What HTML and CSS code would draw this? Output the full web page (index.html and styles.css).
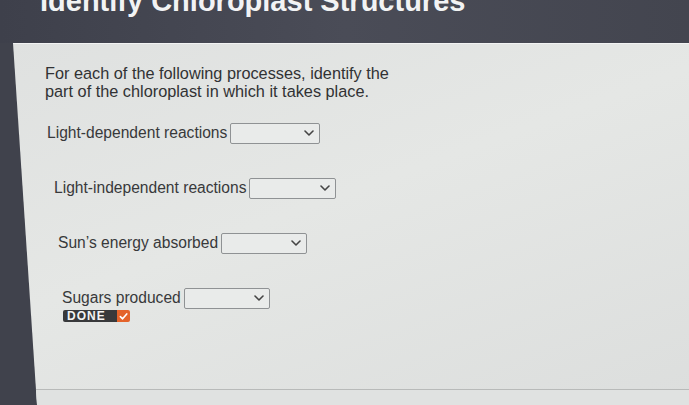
FILE: index.html
```html
<!DOCTYPE html>
<html>
<head>
<meta charset="utf-8">
<link rel="stylesheet" href="styles.css">
</head>
<body>
<header class="top">
  <h1 class="title">Identify Chloroplast Structures</h1>
</header>
<section class="panel">
  <div class="content">
    <p class="question">For each of the following processes, identify the<br>part of the chloroplast in which it takes place.</p>
    <div class="rows">
      <div class="row r1"><span class="label">Light-dependent reactions</span><div class="select w1"><svg class="chev" viewBox="0 0 10 6" width="10" height="6"><path d="M1 1 L5 5 L9 1" fill="none" stroke="#444" stroke-width="1.6" stroke-linecap="round" stroke-linejoin="round"/></svg></div></div>
      <div class="row r2"><span class="label">Light-independent reactions</span><div class="select w2"><svg class="chev" viewBox="0 0 10 6" width="10" height="6"><path d="M1 1 L5 5 L9 1" fill="none" stroke="#444" stroke-width="1.6" stroke-linecap="round" stroke-linejoin="round"/></svg></div></div>
      <div class="row r3"><span class="label">Sun’s energy absorbed</span><div class="select w3"><svg class="chev" viewBox="0 0 10 6" width="10" height="6"><path d="M1 1 L5 5 L9 1" fill="none" stroke="#444" stroke-width="1.6" stroke-linecap="round" stroke-linejoin="round"/></svg></div></div>
      <div class="row r4"><span class="label">Sugars produced</span><div class="select w4"><svg class="chev" viewBox="0 0 10 6" width="10" height="6"><path d="M1 1 L5 5 L9 1" fill="none" stroke="#444" stroke-width="1.6" stroke-linecap="round" stroke-linejoin="round"/></svg></div></div>
    </div>
    <div class="done"><span class="done-text">DONE</span><span class="done-check"><svg viewBox="0 0 10 10" width="9" height="9"><path d="M1.5 5.2 L4 7.6 L8.6 2.2" fill="none" stroke="#fff" stroke-width="1.8" stroke-linecap="round" stroke-linejoin="round"/></svg></span></div>
  </div>
  <div class="footer"></div>
</section>
</body>
</html>
```

FILE: styles.css
```css
html, body {
  margin: 0;
  padding: 0;
  height: 100%;
  overflow: hidden;
}
body {
  background: #40424c;
  font-family: "Liberation Sans", Arial, sans-serif;
  display: flex;
  flex-direction: column;
  width: 689px;
  height: 405px;
}
.top {
  height: 43px;
  flex: none;
  background: linear-gradient(90deg, #3e404b 0%, #4a4c57 50%, #43454f 100%);
}
.title {
  margin: -13px 0 0 40px;
  font-size: 29px;
  line-height: 29px;
  font-weight: bold;
  color: #f2f3f4;
  white-space: nowrap;
}
.panel {
  flex: 1;
  display: flex;
  flex-direction: column;
  background: linear-gradient(160deg, #dfe1e0 0%, #e5e7e5 45%, #dcdedd 100%);
  clip-path: polygon(13px 0, 100% 0, 100% 100%, 37px 100%);
  border-top: 1px solid #f2f3f3;
}
.content {
  flex: 1;
  padding: 20px 0 0 45px;
  color: #3b3c3e;
}
.question {
  margin: 0;
  font-size: 16.3px;
  line-height: 18px;
  color: #313234;
}
.rows {
  margin-top: 22px;
  display: flex;
  flex-direction: column;
  gap: 33px;
}
.row {
  display: flex;
  align-items: center;
  gap: 3px;
  height: 22px;
}
.r1 { padding-left: 2px; }
.r2 { padding-left: 9px; }
.r3 { padding-left: 13px; }
.r4 { padding-left: 17px; }
.label {
  font-size: 15.6px;
  color: #38393b;
}
.select {
  height: 21px;
  box-sizing: border-box;
  border: 1px solid #8f9294;
  border-radius: 2px;
  background: #e9ebea;
  display: flex;
  align-items: center;
  justify-content: flex-end;
  padding-right: 5px;
}
.w1 { width: 90px; }
.w2 { width: 87px; }
.w3 { width: 86px; }
.w4 { width: 86px; }
.chev { display: block; }
.done {
  margin: 1px 0 0 18px;
  display: flex;
  align-items: stretch;
  height: 12px;
  width: 67px;
}
.done-text {
  background: #38393b;
  color: #f3f3f3;
  font-weight: bold;
  font-size: 12px;
  line-height: 12px;
  letter-spacing: 1px;
  padding: 0 2px 0 4px;
  border-radius: 2px 0 0 2px;
  flex: 1;
}
.done-check {
  background: #e4632a;
  width: 13px;
  display: flex;
  align-items: center;
  justify-content: center;
  border-radius: 0 2px 2px 0;
}
.footer {
  height: 15px;
  flex: none;
  border-top: 1px solid #b8bab9;
  background: #e0e2e1;
}
```
